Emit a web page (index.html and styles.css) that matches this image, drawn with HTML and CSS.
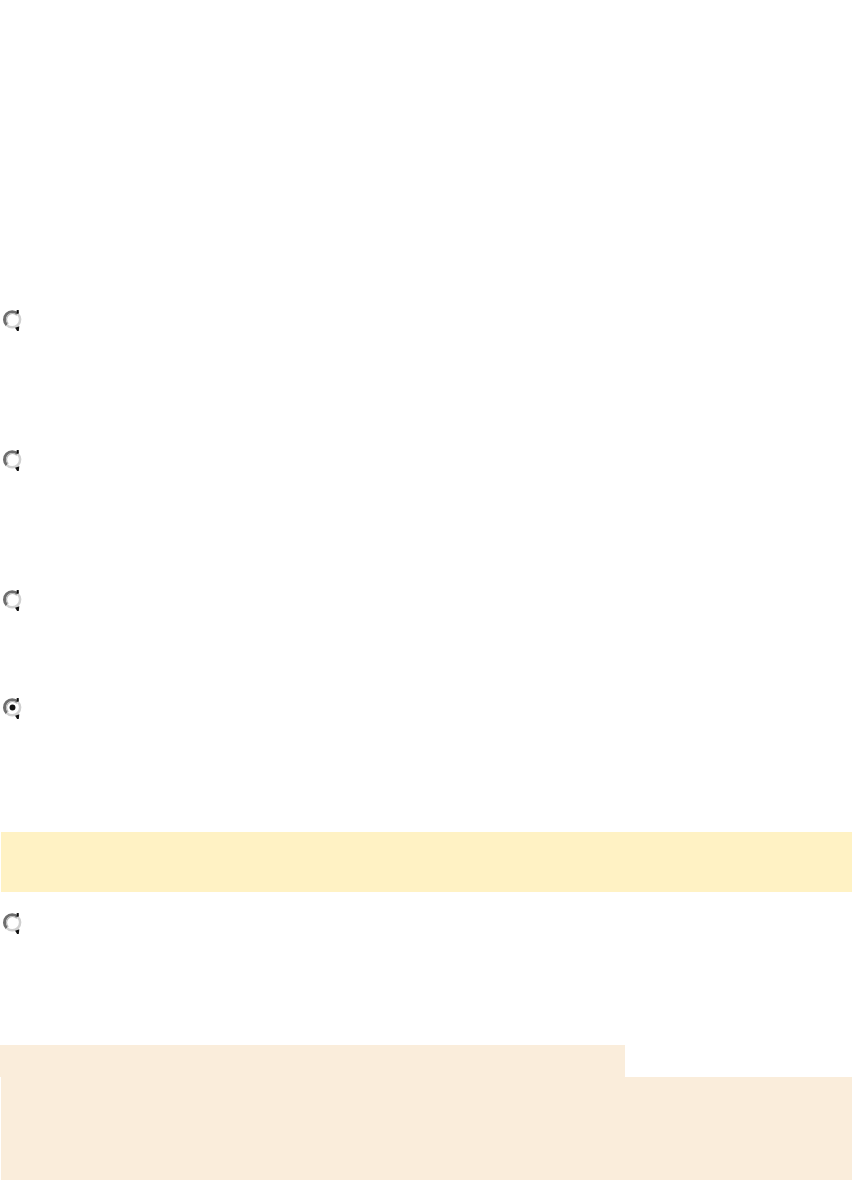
FILE: index.html
```
<!DOCTYPE html>
<html lang="en">
<head>
    <meta charset="UTF-8">
    <meta name="viewport" content="width=device-width, initial-scale=1.0">
    <title>Options</title>
    <link rel="stylesheet" href="styles.css">
</head>
<body>
    <main class="form">
        <div class="intro"></div>

        <label class="option tall">
            <svg class="radio" viewBox="0 0 20 22"><use href="#radio-off"/></svg>
        </label>
        <label class="option tall">
            <svg class="radio" viewBox="0 0 20 22"><use href="#radio-off"/></svg>
        </label>
        <label class="option short">
            <svg class="radio" viewBox="0 0 20 22"><use href="#radio-off"/></svg>
        </label>
        <label class="option last">
            <svg class="radio" viewBox="0 0 20 22"><use href="#radio-on"/></svg>
        </label>

        <div class="notice"></div>

        <label class="option after">
            <svg class="radio" viewBox="0 0 20 22"><use href="#radio-off"/></svg>
        </label>

        <section class="panel">
            <div class="panel-tab"></div>
            <div class="panel-body"></div>
        </section>
    </main>

    <svg width="0" height="0" class="defs">
        <defs>
            <g id="radio-off">
                <path d="M4.6 15.4 A7 7 0 0 1 15 4.6" fill="none" stroke="#6e6e6e" stroke-width="2.8"/>
                <path d="M15 4.6 A7 7 0 0 1 4.6 15.4" fill="none" stroke="#d0d0d0" stroke-width="2.4"/>
                <path d="M6 14 A5.4 5.4 0 0 1 14 6" fill="none" stroke="#b0b0b0" stroke-width="1"/>
                <rect x="14" y="1" width="2" height="3.4" fill="#111"/>
                <path d="M12.5 18 L16.5 16.6 L16 21 L14.4 21 Z" fill="#111"/>
            </g>
            <g id="radio-on">
                <use href="#radio-off"/>
                <circle cx="10" cy="10" r="2.8" fill="#111"/>
            </g>
        </defs>
    </svg>
</body>
</html>
```

FILE: styles.css
```
* {
    margin: 0;
    padding: 0;
    box-sizing: border-box;
}

body {
    background-color: #fff;
    font-family: "Liberation Sans", Arial, sans-serif;
    color: #222;
    overflow: hidden;
}

.form {
    display: flex;
    flex-direction: column;
    width: 852px;
}

.intro {
    height: 309px;
}

.option {
    display: flex;
    align-items: flex-start;
    padding-left: 2px;
}

.option.tall {
    height: 140px;
}

.option.short {
    height: 108px;
}

.option.last {
    height: 135px;
}

.option.after {
    height: 153px;
    padding-top: 20px;
}

.radio {
    display: block;
    width: 21px;
    height: 23px;
}

.notice {
    height: 60px;
    margin-left: 1px;
    background-color: #fff2c4;
}

.panel {
    display: flex;
    flex-direction: column;
}

.panel-tab {
    width: 625px;
    height: 32px;
    background-color: #faeddb;
}

.panel-body {
    height: 103px;
    margin-left: 1px;
    background-color: #faeddb;
}

.defs {
    position: absolute;
}
```
